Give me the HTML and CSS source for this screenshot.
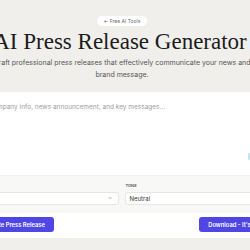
FILE: index.html
```html
<!DOCTYPE html>
<html lang="en">
<head>
<meta charset="utf-8">
<title>AI Press Release Generator</title>
<link rel="stylesheet" href="styles.css">
</head>
<body>
<div class="page">
  <a class="pill">← Free AI Tools</a>
  <h1 class="title">AI Press Release Generator</h1>
  <p class="subtitle">Craft professional press releases that effectively communicate your news and<br>brand message.</p>
  <div class="card">
    <div class="editor">
      <div class="placeholder">Enter company info, news announcement, and key messages...</div>
      <span class="badge"></span>
    </div>
    <div class="options">
      <div class="field">
        <div class="label">Type</div>
        <div class="select"><span>Product</span><span class="chev">⌄</span></div>
      </div>
      <div class="field">
        <div class="label">Tone</div>
        <div class="select"><span class="val">Neutral</span></div>
      </div>
    </div>
    <div class="actions">
      <button class="btn">Generate Press Release</button>
      <button class="btn">Download - It's Free</button>
    </div>
  </div>
</div>
</body>
</html>
```

FILE: styles.css
```css
html, body {
  margin: 0;
  padding: 0;
}
body {
  background: #f0efec;
  font-family: Inter, "Noto Sans", sans-serif;
  overflow: hidden;
  width: 250px;
  height: 250px;
}
.page {
  display: flex;
  flex-direction: column;
  align-items: center;
  padding: 16px 6px 0 0;
}
.pill {
  display: block;
  background: #ffffff;
  color: #6b6b6b;
  font-size: 5px;
  line-height: 6px;
  padding: 2px 7px;
  border-radius: 6px;
}
.title {
  margin: 3px 4px 0 0;
  font-family: "Liberation Serif", serif;
  font-weight: 400;
  font-size: 23px;
  line-height: 26px;
  color: #1c1c1c;
  white-space: nowrap;
}
.subtitle {
  margin: 2px 0 0;
  font-size: 7px;
  line-height: 12px;
  color: #555555;
  text-align: center;
  white-space: nowrap;
}
.card {
  margin: 11px 1px 0 0;
  width: 328px;
  flex: none;
  background: #ffffff;
  border-radius: 8px;
}
.editor {
  position: relative;
  height: 83px;
  padding: 12px 12px 0;
  box-sizing: border-box;
}
.placeholder {
  font-size: 6.5px;
  line-height: 6px;
  color: #9c9c9c;
  padding-left: 2px;
}
.badge {
  position: absolute;
  left: 290px;
  top: 61px;
  width: 3px;
  height: 7px;
  border-radius: 2px;
  background: #bfe6ee;
}
.options {
  display: grid;
  grid-template-columns: 1fr 1fr;
  gap: 6px;
  padding: 8px 12px 8px;
  background: #f8f8f7;
  border-top: 1px solid #f0f0ef;
}
.field {
  display: flex;
  flex-direction: column;
  gap: 4px;
}
.label {
  font-size: 4px;
  line-height: 4px;
  font-weight: 600;
  text-transform: uppercase;
  color: #555555;
  padding-left: 1px;
}
.select {
  height: 13px;
  box-sizing: border-box;
  background: #ffffff;
  border: 1px solid #e6e6e4;
  border-radius: 3px;
  display: flex;
  align-items: center;
  justify-content: space-between;
  padding: 0 5px 0 4px;
  font-size: 6px;
  color: #333333;
}
.chev {
  color: #9a9a9a;
  font-size: 6px;
  line-height: 6px;
  margin-top: -3px;
}
.actions {
  display: flex;
  justify-content: space-between;
  padding: 4px 12px 6px;
}
.btn {
  height: 15px;
  border: none;
  border-radius: 3px;
  background: #4f46e5;
  color: #ffffff;
  font-family: Inter, sans-serif;
  font-size: 5.8px;
  font-weight: 600;
  padding: 0 9px;
}
```
